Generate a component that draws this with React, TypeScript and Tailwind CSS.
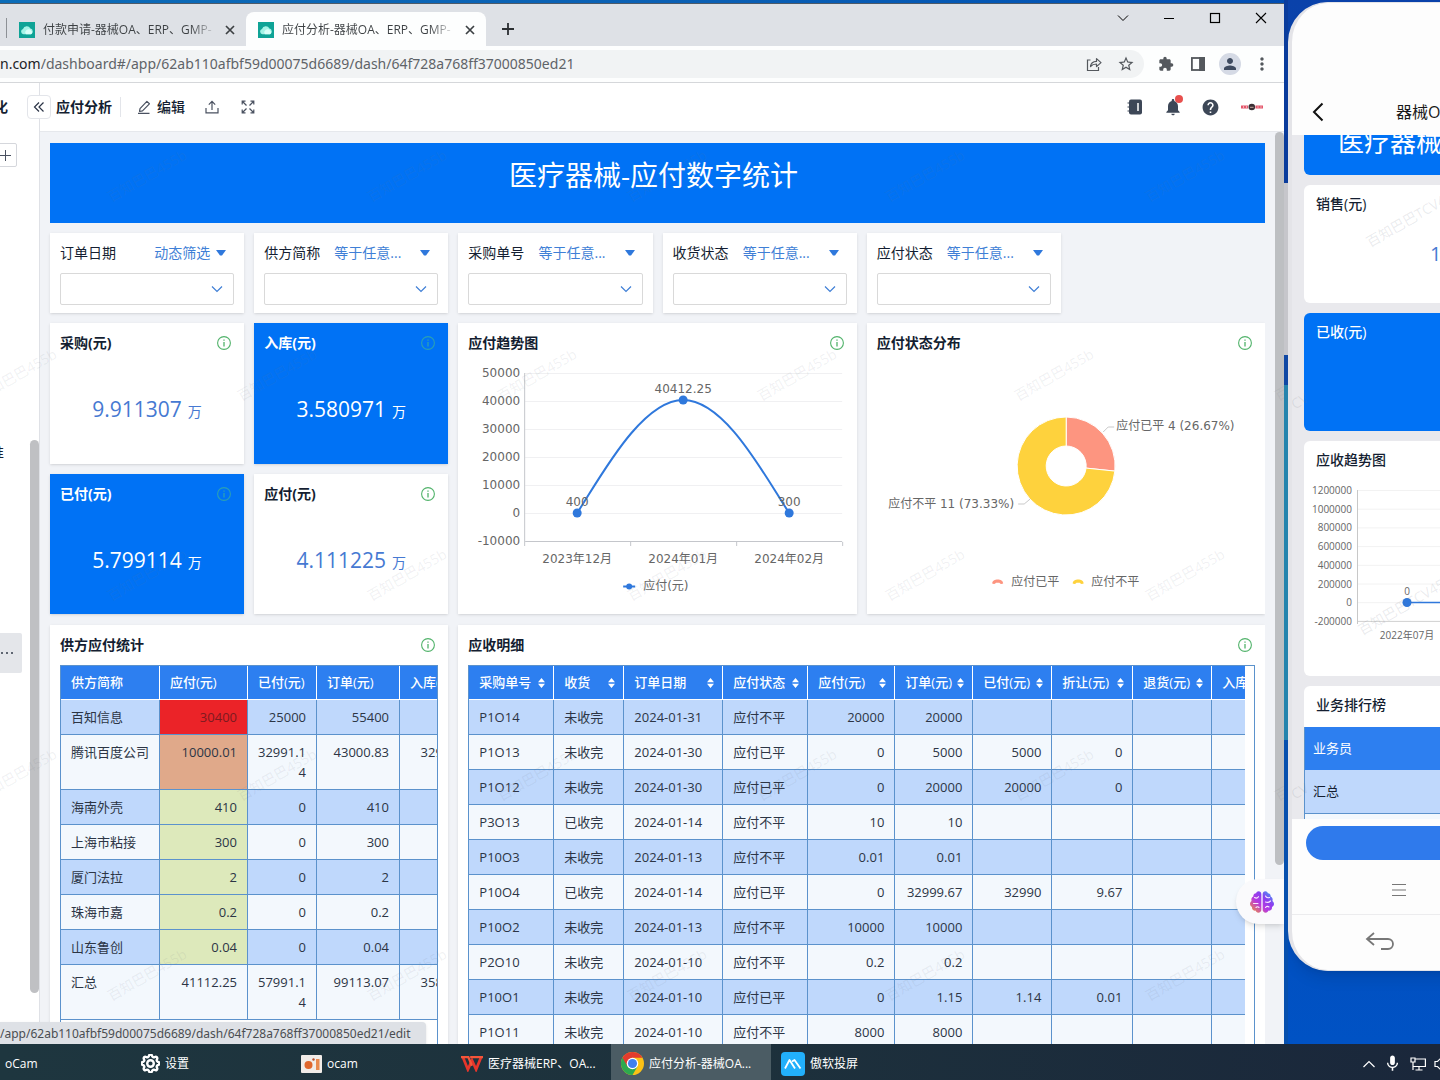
import React from 'react';
import { MdExtension, MdPerson, MdMoreVert, MdStarBorder, MdHelp, MdNotifications, MdMic } from 'react-icons/md';
import { FaBrain } from 'react-icons/fa';
import { BsGear } from 'react-icons/bs';

const MARK_TEXT = '百知巴巴455b';

/* ---------- shared pieces ---------- */

function InfoIcon({ dim = false }: { dim?: boolean }) {
  return (
    <svg
      viewBox="0 0 14 14"
      className={`size-3.5 shrink-0 ${dim ? 'stroke-[#2aa0b4]' : 'stroke-[#52b36b]'}`}
      fill="none"
      aria-label="说明"
    >
      <circle cx="7" cy="7" r="6.4" strokeWidth="1.1" />
      <path d="M7 6v4.4M7 3.4v1.4" strokeWidth="1.3" />
    </svg>
  );
}

function ChevronDown({ className }: { className: string }) {
  return (
    <svg viewBox="0 0 12 12" className={className} fill="none" stroke="currentColor" strokeWidth="1.2">
      <path d="M1 3.5 6 8.5 11 3.5" />
    </svg>
  );
}

function Card({
  title,
  className = '',
  blue = false,
  children,
}: {
  title: string;
  className?: string;
  blue?: boolean;
  children: React.ReactNode;
}) {
  return (
    <section
      className={`flex min-w-0 flex-col overflow-hidden shadow-sm ${blue ? 'bg-[#0072f5] text-white' : 'bg-white text-[#141e31]'} ${className}`}
    >
      <header className="flex h-10 shrink-0 items-center justify-between pr-[13px] pl-2.5">
        <h2 className="text-sm font-bold">{title}</h2>
        <InfoIcon dim={blue} />
      </header>
      {children}
    </section>
  );
}

function Watermark() {
  const rows = [
    { top: 172, xs: [147, 407, 667, 925, 1185] },
    { top: 371, xs: [17, 277, 537, 797, 1054, 1314] },
    { top: 571, xs: [147, 407, 667, 925, 1185] },
    { top: 771, xs: [17, 277, 537, 797, 1054, 1314] },
    { top: 971, xs: [147, 407, 667, 925, 1185] },
  ];
  return (
    <div aria-hidden="true" className="pointer-events-none absolute inset-0 overflow-hidden select-none">
      {rows.map((r) =>
        r.xs.map((x) => (
          <span
            key={`${r.top}-${x}`}
            className="absolute -translate-1/2 -rotate-30 text-sm whitespace-nowrap text-[#6d7480]/10"
            style={{ left: x, top: r.top }}
          >
            {MARK_TEXT}
          </span>
        )),
      )}
    </div>
  );
}

/* ---------- browser chrome ---------- */

function Favicon() {
  return (
    <svg viewBox="0 0 16 16" className="size-4 shrink-0">
      <rect width="16" height="16" fill="#0fa396" />
      <path d="M4.5 12.2a2.6 2.6 0 0 1-.5-5.1 4 4 0 0 1 7.4-.6 3 3 0 0 1 .6 5.7z" fill="#a5f3e6" />
      <path d="M7 12.2a3 3 0 0 1 .6-4.2 3 3 0 0 1 4.8 1 1.900 1.900 0 0 1-.4 3.200z" fill="#d9fff8" />
    </svg>
  );
}

function Tab({ text, active = false }: { text: string; active?: boolean }) {
  return (
    <div className={`flex h-[34px] items-center pt-0.5 pr-2.5 pl-3 ${active ? 'w-60 rounded-t-lg bg-[#fdfefe]' : 'w-[239px]'}`}>
      <Favicon />
      <button className="ml-2 w-[174px] overflow-hidden bg-linear-to-r from-[#3c4043] from-85% to-transparent bg-clip-text text-left text-xs whitespace-nowrap text-transparent">
        {text}
      </button>
      <button aria-label="关闭标签页" className="ml-auto text-[#3c4043]">
        <svg viewBox="0 0 10 10" className="mr-px size-2.5" stroke="currentColor" strokeWidth="1.7">
          <path d="M1 1l8 8M9 1 1 9" />
        </svg>
      </button>
    </div>
  );
}

function TabStrip() {
  return (
    <div className="flex h-[42px] shrink-0 items-end bg-[#dee1e6]">
      <div className="mb-2 ml-1.5 h-5 w-px bg-[#8d9196]" />
      <Tab text="付款申请-器械OA、ERP、GMP-" />
      <Tab text="应付分析-器械OA、ERP、GMP-" active />
      <button aria-label="新标签页" className="mb-[11px] ml-4 text-[#2c2f32]">
        <svg viewBox="0 0 12 12" className="size-3" stroke="currentColor" strokeWidth="1.800">
          <path d="M6 0v12M0 6h12" />
        </svg>
      </button>
      <div className="mr-[17px] mb-[22px] ml-auto flex items-center gap-[34px] text-black">
        <button aria-label="搜索标签页">
          <svg viewBox="0 0 12 12" className="size-3" fill="none" stroke="currentColor"><path d="M1 3.500 6 8.500 11 3.500" /></svg>
        </button>
        <button aria-label="最小化">
          <svg viewBox="0 0 12 12" className="size-3" stroke="currentColor"><path d="M1 6.500h10" /></svg>
        </button>
        <button aria-label="最大化">
          <svg viewBox="0 0 12 12" className="size-3" stroke="currentColor" fill="none"><rect x="1.500" y="1.500" width="9" height="9" strokeWidth="1.200" /></svg>
        </button>
        <button aria-label="关闭">
          <svg viewBox="0 0 12 12" className="size-3" stroke="currentColor"><path d="M1 1l10 10M11 1 1 11" strokeWidth="1.100" /></svg>
        </button>
      </div>
    </div>
  );
}

const TOOL = 'flex w-8 items-center justify-center';

function AddressBar() {
  return (
    <div className="flex h-[37px] shrink-0 items-center border-b border-[#d5d7da] bg-[#fdfefe] text-[#54585d]">
      <div className="flex h-7 flex-1 items-center rounded-r-full bg-[#f1f3f4] pr-0.5 font-['Noto_Sans',sans-serif] text-sm">
        <span className="text-[#202124]">n.com</span>
        <input
          aria-label="地址"
          className="min-w-0 flex-1 bg-transparent text-[#5f6368] outline-none"
          defaultValue="/dashboard#/app/62ab110afbf59d00075d6689/dash/64f728a768ff37000850ed21"
        />
        <button aria-label="分享" className={TOOL}>
          <svg viewBox="0 0 16 16" className="size-4" fill="none" stroke="currentColor" strokeWidth="1.200">
            <path d="M4.500 4H1.500v10.500h11V11" />
            <path d="M4.500 10.500c.4-3.300 2.400-5 6-5.100V2.600l4.500 4-4.500 4V8c-2.600 0-4.500.7-6 2.500z" strokeLinejoin="round" />
          </svg>
        </button>
        <button aria-label="收藏" className={TOOL}><MdStarBorder className="size-[18px]" /></button>
      </div>
      <div className="mx-1.5 flex items-center">
        <button aria-label="扩展程序" className={TOOL}><MdExtension className="size-4" /></button>
        <button aria-label="侧边栏" className={TOOL}>
          <svg viewBox="0 0 16 16" className="size-4" fill="none" stroke="currentColor" strokeWidth="1.800">
            <rect x="1.900" y="2" width="12.200" height="12" />
            <path d="M10 2h4v12h-4z" fill="currentColor" />
          </svg>
        </button>
        <button aria-label="用户" className={TOOL}>
          <span className="flex size-[22px] items-center justify-center rounded-full bg-[#d5dae5]">
            <MdPerson className="size-[18px] text-[#3f4b60]" />
          </span>
        </button>
        <button aria-label="菜单" className={TOOL}><MdMoreVert className="size-5" /></button>
      </div>
    </div>
  );
}

/* ---------- application ---------- */

function Sidebar() {
  return (
    <aside className="flex w-10 shrink-0 flex-col overflow-hidden border-r border-[#dfe1e6] bg-white text-[#141e31]">
      <div className="-ml-1.5 flex h-12 items-center text-sm font-bold">化</div>
      <button aria-label="新建" className="mt-3 -ml-2 flex h-6 w-[25px] items-center justify-center rounded-xs border border-[#d5d7dc]">
        <svg viewBox="0 0 12 12" className="size-3" stroke="#4a5160"><path d="M6.500 1v11M1 6.500h11" /></svg>
      </button>
      <div className="mt-[273px] flex min-h-0 flex-1 justify-between">
        <div className="flex flex-col">
          <span className="-ml-2.5 pt-0.5 text-sm leading-5">准</span>
          <button aria-label="更多" className="mt-[171px] flex h-10 w-[22px] items-center gap-[3px] rounded-r-xs bg-[#e4e6ea]">
            <i className="ml-px size-0.5 rounded-full bg-[#333b4a]" />
            <i className="size-0.5 rounded-full bg-[#333b4a]" />
            <i className="size-0.5 rounded-full bg-[#333b4a]" />
          </button>
        </div>
        <div className="mb-[51px] w-[9px] rounded-full bg-[#bfc0c3]" />
      </div>
    </aside>
  );
}

function Toolbar() {
  return (
    <div className="flex h-[49px] shrink-0 items-center border-b border-[#e6e8ec] bg-white pr-5 text-[#141e31]">
      <button
        aria-label="收起侧栏"
        className="-ml-[13px] flex size-6 items-center justify-center rounded-sm border border-[#e3e5ea] bg-white"
      >
        <svg viewBox="0 0 12 12" className="size-3" fill="none" stroke="#2b3446" strokeWidth="1.200">
          <path d="M6 1.500 1.500 6 6 10.500M10.500 1.500 6 6l4.500 4.500" />
        </svg>
      </button>
      <h1 className="ml-[5px] text-sm font-bold">应付分析</h1>
      <div className="ml-2 h-5 w-px bg-[#e3e5ea]" />
      <button className="ml-4 flex items-center gap-1.5 text-sm font-medium">
        <svg viewBox="0 0 14 14" className="size-3.5" fill="none" stroke="#4a5160" strokeWidth="1.200">
          <path d="M2.500 11.500 3 8.600l6.900-7.200 2.500 2.400-6.900 7.100zM1 13.300h11.500" strokeLinejoin="round" />
        </svg>
        编辑
      </button>
      <button aria-label="导出" className="ml-5">
        <svg viewBox="0 0 14 14" className="size-3.5" fill="none" stroke="#4a5160" strokeWidth="1.200">
          <path d="M7 10V1.500M3.800 4.600 7 1.400l3.200 3.200M1 8v4.800h12V8" />
        </svg>
      </button>
      <button aria-label="全屏" className="ml-[22px]">
        <svg viewBox="0 0 14 14" className="size-3.5" fill="none" stroke="#4a5160" strokeWidth="1.200">
          <path d="M1.200 4.500V1.200h3.300M9.500 1.200h3.300v3.300M12.800 9.500v3.300H9.500M4.500 12.800H1.200V9.500M1.500 1.500l4 4M12.500 1.500l-4 4M12.500 12.500l-4-4M1.500 12.500l4-4" />
        </svg>
      </button>
      <div className="ml-auto flex items-center text-[#3d4757]">
        <button aria-label="通讯录">
          <svg viewBox="0 0 16 16" className="size-4">
            <rect x="2" y="0.500" width="13" height="15" rx="2" fill="currentColor" />
            <path d="M0.500 4h2.500M0.500 8h2.500M0.500 12h2.500" stroke="currentColor" strokeWidth="1.200" />
            <path d="M11 4v8" stroke="#fff" strokeWidth="1.500" />
          </svg>
        </button>
        <button aria-label="通知" className="relative ml-5">
          <MdNotifications className="size-5" />
          <span className="absolute -top-0.5 right-0 size-2 rounded-full bg-[#e8504e]" />
        </button>
        <button aria-label="帮助" className="ml-[18px]"><MdHelp className="size-[19px]" /></button>
        <button aria-label="账户" className="ml-5">
          <svg viewBox="0 0 24 8" className="h-2 w-6">
            <path d="M1 2.500h7v3H1zM15.500 2.500H23v3h-7.500z" fill="#e4566a" />
            <path d="M3 4h1M6 4h1M17.500 4h1M20.500 4h1" stroke="#fff" />
            <circle cx="11.800" cy="4" r="3.300" fill="#3b2f35" />
            <path d="M10 4.300h3.600" stroke="#c8a9a0" />
          </svg>
        </button>
      </div>
    </div>
  );
}

function Filter({ label, op, wide = false }: { label: string; op: string; wide?: boolean }) {
  return (
    <section className="flex flex-col bg-white px-2.5 pb-2 shadow-sm">
      <div className="flex h-10 items-center justify-between pr-2 text-sm">
        <span className="whitespace-nowrap text-[#141e31]">{label}</span>
        <button className="flex items-center gap-1.5 whitespace-nowrap text-[#3f7fd6]">
          <span className={wide ? 'w-20 text-left' : ''}>{op}</span>
          <svg viewBox="0 0 10 6" className="h-1.5 w-2.5" fill="#2f78dc"><path d="M0 0h10L6 5.500H4z" /></svg>
        </button>
      </div>
      <div className="relative text-[#3f7fd6]">
        <select aria-label={label} className="block h-8 w-full appearance-none rounded-xs border border-[#d9d9d9] bg-white">
          <option></option>
        </select>
        <ChevronDown className="pointer-events-none absolute top-2.5 right-[11px] size-3" />
      </div>
    </section>
  );
}

function Kpi({ title, value, blue = false }: { title: string; value: string; blue?: boolean }) {
  return (
    <Card title={title} blue={blue}>
      <p className={`flex flex-1 items-baseline justify-center gap-1.5 pt-8 ${blue ? 'text-white' : 'text-[#4679d2]'}`}>
        <span className="text-[21px] leading-7">{value}</span>
        <span className="text-sm">万</span>
      </p>
    </Card>
  );
}

const CHART_TEXT = "font-['DejaVu_Sans','Noto_Sans_CJK_SC',sans-serif] text-xs";

function TrendChart() {
  const ticks = ['50000', '40000', '30000', '20000', '10000', '0', '-10000'];
  const months = ['2023年12月', '2024年01月', '2024年02月'];
  return (
    <svg viewBox="0 0 398 251" className={`h-[251px] w-full ${CHART_TEXT}`} fill="#666">
      {ticks.map((t, i) => (
        <g key={t}>
          <path d={`M67 ${10.5 + i * 28}H384`} stroke={i === 6 ? '#c4c6cb' : '#f0f0f2'} />
          <text x="62" y={14 + i * 28} textAnchor="end">{t}</text>
        </g>
      ))}
      <path d="M66.500 10v173M172.500 179v4M278.500 179v4M384.500 179v4" stroke="#c4c6cb" />
      <path d="M119 150C142 115 183 37 225 37S306 112 331 150" fill="none" stroke="#2f78dc" strokeWidth="2" />
      <text x="119" y="143" textAnchor="middle">400</text>
      <text x="225" y="30" textAnchor="middle">40412.25</text>
      <text x="331" y="143" textAnchor="middle">300</text>
      {[[119, 150], [225, 37], [331, 150]].map(([x, y]) => (
        <circle key={x} cx={x} cy={y} r="4.500" fill="#2f78dc" />
      ))}
      {months.map((m, i) => (
        <text key={m} x={119 + i * 106} y="200" textAnchor="middle">{m}</text>
      ))}
      <path d="M165 223.500h12" stroke="#2f78dc" strokeWidth="2" />
      <circle cx="171" cy="223.500" r="3" fill="#2f78dc" />
      <text x="185" y="227">应付(元)</text>
    </svg>
  );
}

function PieChart() {
  return (
    <svg viewBox="0 0 398 251" className={`h-[251px] w-full ${CHART_TEXT}`} fill="#666">
      <g stroke="#fff">
        <path d="M199 54A49 49 0 0 1 247.700 108.100L218.900 105.100A20 20 0 0 0 199 83z" fill="#fd9580" />
        <path d="M247.700 108.100A49 49 0 1 1 199 54V83A20 20 0 1 0 218.900 105.100z" fill="#fed23d" />
      </g>
      <path d="M236 69l5-5h6M163 136l-6 5h-6" fill="none" stroke="#c9c9c9" />
      <text x="249" y="67">应付已平 4 (26.67%)</text>
      <text x="147" y="145" textAnchor="end">应付不平 11 (73.33%)</text>
      <path d="M125 220.500c0-5.500 11-5.500 11 0q-2.500 1.200-3.800-.8h-3.400q-1.300 2-3.800.8z" fill="#fd9580" />
      <text x="144" y="223">应付已平</text>
      <path d="M205.500 220.500c0-5.500 11-5.500 11 0q-2.500 1.200-3.800-.8h-3.400q-1.300 2-3.800.8z" fill="#fed23d" />
      <text x="224" y="223">应付不平</text>
    </svg>
  );
}

/* ---------- tables ---------- */

const TH = 'h-[34px] border-r border-b border-white bg-[#2d7ff0] p-0 px-2.5 text-left font-medium whitespace-nowrap text-white';
const TD = 'border-r border-b border-[#5b92cc] px-2.5 py-[7px] align-top leading-5';

const supplierCols = [
  { name: '供方简称', w: 'w-[99px]' },
  { name: '应付(元)', w: 'w-[88px]' },
  { name: '已付(元)', w: 'w-[69px]' },
  { name: '订单(元)', w: 'w-[83px]' },
  { name: '入库(元)', w: 'w-[87px]' },
];

const supplierRows: { cells: string[]; heat: string }[] = [
  { cells: ['百知信息', '30400', '25000', '55400', ''], heat: 'bg-[#eb2328]' },
  { cells: ['腾讯百度公司', '10000.01', '32991.14', '43000.83', '32999.67'], heat: 'bg-[#e0a98a]' },
  { cells: ['海南外壳', '410', '0', '410', ''], heat: 'bg-[#dde9bb]' },
  { cells: ['上海市粘接', '300', '0', '300', ''], heat: 'bg-[#dde9bb]' },
  { cells: ['厦门法拉', '2', '0', '2', ''], heat: 'bg-[#dde9bb]' },
  { cells: ['珠海市嘉', '0.2', '0', '0.2', ''], heat: 'bg-[#dde9bb]' },
  { cells: ['山东鲁创', '0.04', '0', '0.04', ''], heat: 'bg-[#dde9bb]' },
  { cells: ['汇总', '41112.25', '57991.14', '99113.07', '35809.71'], heat: '' },
];

function SupplierTable() {
  return (
    <div className="mx-2.5 min-h-0 flex-1 overflow-hidden border-x border-t border-[#5b92cc]">
      <table className="w-[426px] table-fixed border-separate border-spacing-0 text-[13px] text-[#2c3545]">
        <thead>
          <tr>
            {supplierCols.map((c) => (
              <th key={c.name} scope="col" className={`${TH} ${c.w}`}>{c.name}</th>
            ))}
          </tr>
        </thead>
        <tbody>
          {supplierRows.map((r, i) => (
            <tr key={r.cells[0]} className={i % 2 ? 'bg-[#f3f8fd]' : 'bg-[#bfd8fc]'}>
              {r.cells.map((v, j) => (
                <td
                  key={j}
                  className={`${TD} ${j === 0 ? 'whitespace-nowrap' : 'pl-2! text-right break-all'} ${j === 1 ? r.heat : ''} ${i === 0 && j === 1 ? 'text-[#7d1a20]' : ''}`}
                >
                  {v}
                </td>
              ))}
            </tr>
          ))}
        </tbody>
      </table>
    </div>
  );
}

const detailCols = [
  { name: '采购单号', w: 'w-[85px]' },
  { name: '收货', w: 'w-[70px]' },
  { name: '订单日期', w: 'w-[99px]' },
  { name: '应付状态', w: 'w-[85px]' },
  { name: '应付(元)', w: 'w-[87px]' },
  { name: '订单(元)', w: 'w-[78px]' },
  { name: '已付(元)', w: 'w-[79px]' },
  { name: '折让(元)', w: 'w-[81px]' },
  { name: '退货(元)', w: 'w-[79px]' },
  { name: '入库(元)', w: 'w-[91px]' },
];

const detailRows = [
  ['P1O14', '未收完', '2024-01-31', '应付不平', '20000', '20000', '', '', '', ''],
  ['P1O13', '未收完', '2024-01-30', '应付已平', '0', '5000', '5000', '0', '', ''],
  ['P1O12', '未收完', '2024-01-30', '应付已平', '0', '20000', '20000', '0', '', ''],
  ['P3O13', '已收完', '2024-01-14', '应付不平', '10', '10', '', '', '', ''],
  ['P10O3', '未收完', '2024-01-13', '应付不平', '0.01', '0.01', '', '', '', ''],
  ['P10O4', '已收完', '2024-01-14', '应付已平', '0', '32999.67', '32990', '9.67', '', ''],
  ['P10O2', '未收完', '2024-01-13', '应付不平', '10000', '10000', '', '', '', ''],
  ['P2O10', '未收完', '2024-01-10', '应付不平', '0.2', '0.2', '', '', '', ''],
  ['P10O1', '未收完', '2024-01-10', '应付已平', '0', '1.15', '1.14', '0.01', '', ''],
  ['P1O11', '未收完', '2024-01-10', '应付不平', '8000', '8000', '', '', '', ''],
];

function DetailTable() {
  return (
    <div className="mx-2.5 min-h-0 flex-1 overflow-hidden border-x border-t border-[#5b92cc] pr-[9px]">
      <div className="overflow-hidden">
        <table className="w-[834px] table-fixed border-separate border-spacing-0 text-[13px] text-[#2c3545]">
          <thead>
            <tr>
              {detailCols.map((c) => (
                <th key={c.name} scope="col" className={`${TH} ${c.w}`}>
                  <button className="-mr-0.5 flex w-[calc(100%+2px)] items-center justify-between">
                    {c.name}
                    <svg viewBox="0 0 7 10" className="h-2.5 w-[7px]" fill="#fff"><path d="M3.500 0 7 4.300H0zM3.500 10 0 5.700h7z" /></svg>
                  </button>
                </th>
              ))}
            </tr>
          </thead>
          <tbody>
            {detailRows.map((r, i) => (
              <tr key={r[0]} className={i % 2 ? 'bg-[#f3f8fd]' : 'bg-[#bfd8fc]'}>
                {r.map((v, j) => (
                  <td key={j} className={`${TD} whitespace-nowrap ${j > 3 ? 'text-right' : ''}`}>{v}</td>
                ))}
              </tr>
            ))}
          </tbody>
        </table>
      </div>
    </div>
  );
}

function Dashboard() {
  return (
    <div className="flex min-h-0 flex-1 bg-[#f1f3f7]">
      <div className="flex min-w-0 flex-1 flex-col gap-2.5 overflow-hidden pt-[11px] pl-2.5">
        <div className="flex h-20 shrink-0 items-center justify-center bg-[#0072f5] pr-2 pb-4 text-[28px] text-white">
          医疗器械-应付数字统计
        </div>
        <div className="grid shrink-0 grid-cols-6 gap-2.5">
          <Filter label="订单日期" op="动态筛选" />
          <Filter label="供方简称" op="等于任意..." wide />
          <Filter label="采购单号" op="等于任意..." wide />
          <Filter label="收货状态" op="等于任意..." wide />
          <Filter label="应付状态" op="等于任意..." wide />
        </div>
        <div className="grid shrink-0 grid-cols-3 gap-2.5">
          <div className="grid grid-cols-2 grid-rows-2 gap-2.5">
            <Kpi title="采购(元)" value="9.911307" />
            <Kpi title="入库(元)" value="3.580971" blue />
            <Kpi title="已付(元)" value="5.799114" blue />
            <Kpi title="应付(元)" value="4.111225" />
          </div>
          <Card title="应付趋势图"><TrendChart /></Card>
          <Card title="应付状态分布"><PieChart /></Card>
        </div>
        <div className="grid min-h-0 flex-1 grid-cols-3 grid-rows-1 gap-2.5 pt-px">
          <Card title="供方应付统计"><SupplierTable /></Card>
          <Card title="应收明细" className="col-span-2"><DetailTable /></Card>
        </div>
      </div>
      <div className="ml-2.5 h-[733px] w-[9px] shrink-0 rounded-full bg-[#bdbfc2]" />
    </div>
  );
}

function BrowserWindow() {
  return (
    <div className="relative flex min-w-0 flex-1 flex-col overflow-hidden border-t border-[#4d5a68] bg-white">
      <TabStrip />
      <AddressBar />
      <div className="flex min-h-0 flex-1">
        <Sidebar />
        <div className="flex min-w-0 flex-1 flex-col">
          <Toolbar />
          <Dashboard />
        </div>
      </div>
      <Watermark />
      <button aria-label="智能助手" className="absolute right-0 bottom-[120px] flex h-[45px] w-12 items-center rounded-l-full bg-[#fafafc] pl-3.5 shadow-md">
        <svg className="size-0" aria-hidden="true">
          <linearGradient id="brain" x1="0" y1="1" x2="1" y2="0">
            <stop offset="0" stopColor="#f59a2a" />
            <stop offset=".4" stopColor="#b83adf" />
            <stop offset=".65" stopColor="#8a3ff0" />
            <stop offset="1" stopColor="#35b6f5" />
          </linearGradient>
        </svg>
        <span className="relative">
          <FaBrain className="size-6 fill-[url(#brain)]" />
          <svg viewBox="0 0 24 24" className="absolute inset-0 size-6" fill="none" stroke="#fbeaff" strokeWidth="1.100" strokeLinecap="round" aria-hidden="true">
            <path d="M4.500 7.500q2.500 1.500 4-.8M3.500 13.500h4.500M6 17.500q1.500-1.500 3 0M15.500 6q1 2.500 4 1.500M15.500 12q3 1 5-1M15.500 17.500q1.500-2 3.500-.5" />
          </svg>
        </span>
      </button>
      <div className="absolute bottom-0 left-0 h-[22px] w-[426px] overflow-hidden rounded-tr-sm bg-[#dee1e6] font-['Noto_Sans',sans-serif] text-xs leading-[23px] text-[#4a4d51] shadow-sm">
        /app/62ab110afbf59d00075d6689/dash/64f728a768ff37000850ed21/edit
      </div>
    </div>
  );
}

/* ---------- mirrored phone ---------- */

function PhoneChart() {
  const ticks = ['1200000', '1000000', '800000', '600000', '400000', '200000', '0', '-200000'];
  return (
    <svg viewBox="0 0 200 195" className="h-[195px] w-[200px] text-[10px]" fill="#666">
      {ticks.map((t, i) => (
        <g key={t}>
          <path d={`M54 ${10.5 + i * 18.7}H200`} stroke={i === 7 ? '#d0d0d0' : '#f2f2f2'} />
          <text x="48" y={14 + i * 18.7} textAnchor="end">{t}</text>
        </g>
      ))}
      <path d="M53.500 10v134" stroke="#c8c8c8" />
      <path d="M103 122.500h97" stroke="#2f78dc" strokeWidth="1.500" />
      <circle cx="103" cy="122.500" r="4.500" fill="#2f78dc" />
      <text x="103" y="115" textAnchor="middle">0</text>
      <text x="103" y="159" textAnchor="middle">2022年07月</text>
    </svg>
  );
}

function Phone() {
  return (
    <div className="relative flex h-[969px] w-[400px] flex-col overflow-hidden rounded-[40px] border border-l-4 border-[#e4e4e8] bg-[#fdfdfd] text-[#1a1a1a] shadow-lg">
      <div className="flex h-[132px] shrink-0 items-end pb-[11px] pl-5">
        <button aria-label="返回" className="mb-0.5">
          <svg viewBox="0 0 12 20" className="h-5 w-3" fill="none" stroke="#111" strokeWidth="2"><path d="M10.500 1.500 2 10l8.500 8.500" /></svg>
        </button>
        <span className="ml-[72px] text-base leading-6">器械OA、ERP</span>
      </div>
      <div className="flex min-h-0 flex-1 flex-col gap-2.5 overflow-hidden bg-[#e9e9ed] pl-3">
        <div className="flex h-10 shrink-0 items-start overflow-hidden rounded-b-md bg-[#0072f5] pl-[34px] text-[26px] leading-[15px] whitespace-nowrap text-white">
          医疗器械-应收数字统计
        </div>
        <section className="h-[118px] shrink-0 rounded-md bg-white px-3 pt-[7px] text-[#141e31]">
          <h2 className="text-sm leading-6 font-medium">销售(元)</h2>
          <p className="pt-6 pl-[114px] text-xl text-[#4679d2]">1.2</p>
        </section>
        <section className="h-[118px] shrink-0 rounded-md bg-[#0072f5] px-3 pt-[7px] text-white">
          <h2 className="text-sm leading-6 font-medium">已收(元)</h2>
        </section>
        <section className="h-[235px] shrink-0 rounded-md bg-white pt-[7px] text-[#141e31]">
          <h2 className="pl-3 text-sm leading-6 font-medium">应收趋势图</h2>
          <div className="mt-2"><PhoneChart /></div>
        </section>
        <section className="min-h-0 flex-1 overflow-hidden rounded-t-md bg-white text-[#141e31]">
          <h2 className="flex h-[41px] items-center pb-1 pl-3 text-sm font-medium">业务排行榜</h2>
          <table className="w-full border-l border-[#5b92cc] text-left text-[13px]">
            <thead>
              <tr><th scope="col" className="h-[43px] bg-[#2d7ff0] pl-2 font-normal text-white">业务员</th></tr>
            </thead>
            <tbody>
              <tr><td className="h-[43px] border-b border-[#5b92cc] bg-[#bfd8fc] pl-2">汇总</td></tr>
              <tr><td className="h-[43px] bg-[#f3f8fd] pl-2"></td></tr>
            </tbody>
          </table>
        </section>
      </div>
      <div className="h-12 shrink-0 pt-[7px] pl-3.5">
        <button aria-label="操作" className="h-[34px] w-full rounded-l-full bg-[#2f7aec]" />
      </div>
      <div className="flex h-[47px] shrink-0 items-center pb-0.5 pl-[100px]">
        <button aria-label="菜单">
          <svg viewBox="0 0 14 14" className="size-3.5" stroke="#777" strokeWidth="1.200"><path d="M0 1.500h14M0 7h14M0 12.500h14" /></svg>
        </button>
      </div>
      <div className="flex h-14 shrink-0 items-center border-t border-[#ececee] pb-1 pl-[73px]">
        <button aria-label="后退">
          <svg viewBox="0 0 30 18" className="h-[18px] w-[30px]" fill="none" stroke="#777" strokeWidth="1.800">
            <path d="M9 1 2 7l7 6M2 7h21a5 5 0 0 1 0 10h-7" />
          </svg>
        </button>
      </div>
      <div aria-hidden="true" className="pointer-events-none absolute inset-0 text-sm whitespace-nowrap text-[#6d7480]/14">
        <span className="absolute top-[202px] left-[68px] -rotate-30">百知巴巴TCV455b</span>
        <span className="absolute top-[390px] -left-2 -rotate-30">TCV</span>
        <span className="absolute top-[590px] left-[60px] -rotate-30">百知巴巴TCV455b</span>
        <span className="absolute top-[780px] -left-2 -rotate-30">TCV</span>
      </div>
    </div>
  );
}

/* ---------- taskbar ---------- */

function Task({ icon, text, active = false }: { icon?: React.ReactNode; text: string; active?: boolean }) {
  return (
    <button className={`flex h-full w-40 shrink-0 items-center gap-[5px] pt-[3px] pl-2.5 whitespace-nowrap ${active ? 'bg-[#4b5c64]' : ''}`}>
      {icon}
      {text}
    </button>
  );
}

function Taskbar() {
  return (
    <div className="flex h-9 shrink-0 items-center overflow-hidden bg-linear-to-r from-[#1e363f] via-[#1d313c] to-[#1a273b] text-xs text-white">
      <button className="h-full w-[131px] shrink-0 pt-[3px] pl-[5px] text-left">oCam</button>
      <Task icon={<BsGear className="size-[19px] stroke-1" />} text="设置" />
      <Task
        icon={
          <svg viewBox="0 0 21 18" className="h-[18px] w-[21px]">
            <rect width="21" height="18" rx="1" fill="#f1ece8" />
            <circle cx="7.500" cy="10" r="4" fill="#e0672c" />
            <rect x="15" y="4" width="3.500" height="11" fill="#e98a4e" />
            <circle cx="12.500" cy="4.500" r="1.200" fill="#b94d2a" />
          </svg>
        }
        text="ocam"
      />
      <Task
        icon={
          <svg viewBox="0 0 24 17" className="h-[17px] w-[22px]" fill="none" strokeWidth="3">
            <path d="M2 1.500 7.500 15 12 5l4.500 10L22 1.500" stroke="#e7352b" />
            <path d="M0 1.500h8L12 11M10 1.500h14" stroke="#f4553a" strokeWidth="2.500" />
          </svg>
        }
        text="医疗器械ERP、OA..."
      />
      <Task
        active
        icon={
          <svg viewBox="0 0 48 48" className="size-[23px]">
            <circle cx="24" cy="24" r="24" fill="#fbc116" />
            <path d="M24 24 3.200 12A24 24 0 0 0 24 48l10.400-18z" fill="#2da94f" />
            <path d="M3.200 12A24 24 0 0 1 44.800 12H24v12L13.600 30z" fill="#e33b2e" />
            <circle cx="24" cy="24" r="12" fill="#fff" />
            <circle cx="24" cy="24" r="9.500" fill="#3f7fee" />
          </svg>
        }
        text="应付分析-器械OA..."
      />
      <Task
        icon={
          <svg viewBox="0 0 24 24" className="size-6">
            <rect width="24" height="24" rx="4" fill="#22b0fb" />
            <path d="M4 16.500 8.500 8l5.500 8.500M11 9.500 13.500 8l6 8.500" fill="none" stroke="#fff" strokeWidth="1.800" strokeLinejoin="round" />
          </svg>
        }
        text="傲软投屏"
      />
      <div className="ml-auto flex shrink-0 items-center gap-2 pt-[3px]">
        <button aria-label="显示隐藏的图标">
          <svg viewBox="0 0 12 12" className="size-3" fill="none" stroke="#fff" strokeWidth="1.200"><path d="M0.500 9 6 3.500 11.500 9" /></svg>
        </button>
        <button aria-label="麦克风"><MdMic className="size-[19px]" /></button>
        <button aria-label="网络">
          <svg viewBox="0 0 16 14" className="h-3.5 w-4" fill="none" stroke="#fff" strokeWidth="1.200">
            <path d="M5 2h10.400v7.500H3V6M9 9.500V13M5.500 13h7M1 1h4v4H1zM3 5v8" />
          </svg>
        </button>
        <button aria-label="音量" className="w-1.5 overflow-hidden">
          <svg viewBox="0 0 12 14" className="h-3.5 w-3" fill="none" stroke="#fff" strokeWidth="1.200"><path d="M1 4.500h2.500L7 1v12L3.500 9.500H1z" /></svg>
        </button>
      </div>
    </div>
  );
}

export default function App() {
  return (
    <div className="flex h-screen flex-col overflow-hidden bg-linear-to-r from-[#0b6cb8] via-[#0a5fb4] to-[#0048b4] font-['Open_Sans','Noto_Sans_CJK_SC',sans-serif]">
      <div className="flex min-h-0 flex-1">
        <div className="flex min-w-0 flex-1 pt-[3px]">
          <BrowserWindow />
        </div>
        <div className="flex w-1 shrink-0 flex-col">
          <div className="h-[183px] bg-[#0a3c9c]" />
          <div className="h-[172px] bg-[#c6c6cb]" />
          <div className="h-[30px] bg-[#1048a4]" />
          <div className="h-[355px] bg-[#2584ad]" />
          <div className="flex-1 bg-[#0750ae]" />
        </div>
        <div className="w-[152px] shrink-0 overflow-hidden bg-linear-to-b from-[#0a42aa] to-[#0052c4] pt-0.5">
          <Phone />
        </div>
      </div>
      <Taskbar />
    </div>
  );
}
